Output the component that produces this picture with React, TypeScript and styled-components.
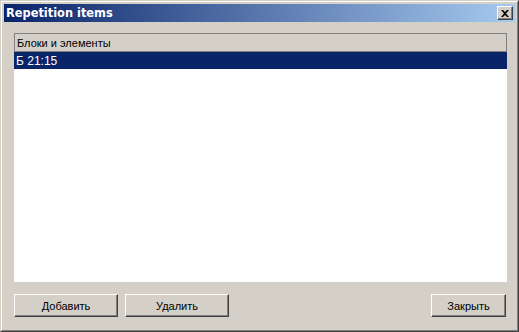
import React from "react";
import styled, { createGlobalStyle } from "styled-components";

const Global = createGlobalStyle`
  html, body { margin: 0; padding: 0; background: #d4d0c8; }
  * { box-sizing: border-box; }
`;

const Frame = styled.div`
  width: 519px;
  height: 332px;
  background: #d4d0c8;
  border-top: 1px solid #d4d0c8;
  border-left: 1px solid #d4d0c8;
  border-right: 1px solid #404040;
  border-bottom: 1px solid #404040;
  font-family: "Liberation Sans", Arial, sans-serif;
`;

const Inner = styled.div`
  height: 100%;
  border-top: 1px solid #ffffff;
  border-left: 1px solid #ffffff;
  border-right: 1px solid #808080;
  border-bottom: 1px solid #808080;
  padding: 2px;
  display: flex;
  flex-direction: column;
`;

const TitleBar = styled.div`
  height: 18px;
  flex: none;
  background: linear-gradient(to right, #0a246a, #a6caf0);
  display: flex;
  align-items: center;
  justify-content: space-between;
  padding: 0 2px 0 2px;
`;

const Title = styled.span`
  color: #fff;
  font-family: "DejaVu Sans", sans-serif;
  font-weight: bold;
  font-size: 11.4px;
`;

const CloseBtn = styled.div`
  width: 16px;
  height: 14px;
  background: #d4d0c8;
  border-top: 1px solid #fff;
  border-left: 1px solid #fff;
  border-right: 1px solid #404040;
  border-bottom: 1px solid #404040;
  box-shadow: inset -1px -1px 0 #808080;
  display: flex;
  align-items: center;
  justify-content: center;
`;

const Body = styled.div`
  flex: 1;
  display: flex;
  flex-direction: column;
  padding: 11px 8px 11px 10px;
`;

const List = styled.div`
  height: 249px;
  background: #fff;
  display: flex;
  flex-direction: column;
`;

const Header = styled.div`
  height: 19px;
  background: #d4d0c8;
  border: 1px solid #808080;
  display: flex;
  align-items: center;
  padding-left: 2px;
  font-size: 11px;
  color: #000;
`;

const Row = styled.div<{ $selected?: boolean }>`
  height: 17px;
  display: flex;
  align-items: center;
  padding-left: 2px;
  font-size: 12px;
  color: ${(p) => (p.$selected ? "#fff" : "#000")};
  background: ${(p) => (p.$selected ? "#0a246a" : "#fff")};
`;

const Buttons = styled.div`
  margin-top: 12px;
  display: flex;
  gap: 7px;
  padding-right: 1px;
`;

const Button = styled.button<{ $w: number }>`
  width: ${(p) => p.$w}px;
  height: 23px;
  padding: 0;
  background: #d4d0c8;
  border-top: 1px solid #fff;
  border-left: 1px solid #fff;
  border-right: 1px solid #404040;
  border-bottom: 1px solid #404040;
  box-shadow: inset -1px -1px 0 #808080;
  font-family: "Liberation Sans", Arial, sans-serif;
  font-size: 11px;
  color: #000;
  &:last-child { margin-left: auto; }
`;

export default function App() {
  return (
    <>
      <Global />
      <Frame>
        <Inner>
          <TitleBar>
            <Title>Repetition items</Title>
            <CloseBtn>
              <svg width="8" height="7" viewBox="0 0 8 7">
                <path d="M0 0h2l2 2 2-2h2L5 3.5 8 7H6L4 5 2 7H0l3-3.5z" fill="#000" />
              </svg>
            </CloseBtn>
          </TitleBar>
          <Body>
            <List>
              <Header>Блоки и элементы</Header>
              <Row $selected>Б 21:15</Row>
            </List>
            <Buttons>
              <Button $w={104}>Добавить</Button>
              <Button $w={104}>Удалить</Button>
              <Button $w={75}>Закрыть</Button>
            </Buttons>
          </Body>
        </Inner>
      </Frame>
    </>
  );
}
